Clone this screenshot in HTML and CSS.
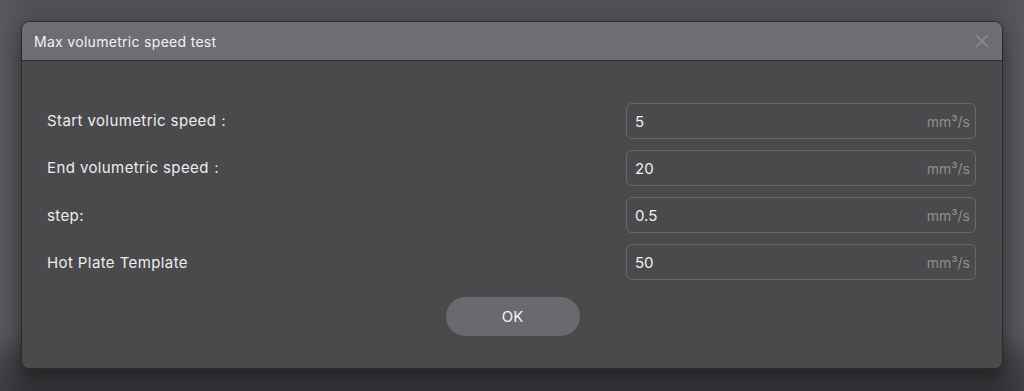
FILE: index.html
```html
<!DOCTYPE html>
<html>
<head>
<title>Max volumetric speed test</title>
<link rel="stylesheet" href="styles.css">
</head>
<body>

<div class="dialog">
 <div class="title-bar">
  <span class="title">Max volumetric speed test</span>
  <span class="close">
   <svg width="14" height="14" viewBox="0 0 14 14"><path d="M1.5 1.5 L12.5 12.5 M12.5 1.5 L1.5 12.5" stroke="#8d8c92" stroke-width="1.6" stroke-linecap="round"/></svg>
  </span>
 </div>

 <div class="content">
  <div class="form-row">
   <label>Start volumetric speed：</label>
   <div class="field"><span class="value">5</span><span class="unit">mm³/s</span></div>
  </div>
  <div class="form-row">
   <label>End volumetric speed：</label>
   <div class="field"><span class="value">20</span><span class="unit">mm³/s</span></div>
  </div>
  <div class="form-row">
   <label>step:</label>
   <div class="field"><span class="value">0.5</span><span class="unit">mm³/s</span></div>
  </div>
  <div class="form-row">
   <label>Hot Plate Template</label>
   <div class="field"><span class="value">50</span><span class="unit">mm³/s</span></div>
  </div>

  <div class="buttons">
   <button class="ok-btn">OK</button>
  </div>
 </div>
</div>

</body>
</html>
```

FILE: styles.css
```css
body {
 margin: 0;
 height: 391px;
 overflow: hidden;
 font-family: "Inter", "Liberation Sans", sans-serif;
 background:
  linear-gradient(90deg, rgba(255, 255, 255, 0.05) 0%, rgba(255, 255, 255, 0) 3%, rgba(255, 255, 255, 0) 97%, rgba(255, 255, 255, 0.05) 100%),
  linear-gradient(180deg, #504f54 0%, #4e4d52 85%, #3a393d 93%, #323135 100%);
}

.dialog {
 margin: 21px 0 0 21px;
 width: 980px;
 height: 346px;
 background-color: #4a4a4c;
 border: 1px solid #2c2c2e;
 border-radius: 8px;
 overflow: hidden;
 box-shadow: 0 8px 18px rgba(0, 0, 0, 0.4);
}

.title-bar {
 display: flex;
 align-items: center;
 justify-content: space-between;
 height: 38px;
 padding: 0 12px 0 12px;
 background-color: #6e6d73;
 border-bottom: 1px solid #2e2e30;
}
.title {
 color: #f2f2f4;
 font-size: 14px;
 letter-spacing: 0.3px;
}
.close {
 display: flex;
 margin-right: 1px;
}

.content {
 padding: 42px 26px 0 25px;
}

.form-row {
 display: flex;
 align-items: center;
 justify-content: space-between;
 margin-bottom: 11px;
}
.form-row label {
 color: #ededef;
 font-size: 15px;
 letter-spacing: 0.4px;
}
.field {
 display: flex;
 align-items: center;
 justify-content: space-between;
 box-sizing: border-box;
 width: 350px;
 height: 36px;
 padding: 0 5px 0 8px;
 border: 1px solid #69696c;
 border-radius: 6px;
}
.value {
 color: #f0f0f2;
 font-size: 15px;
}
.unit {
 color: #8e8e91;
 font-size: 14px;
}

.buttons {
 display: flex;
 justify-content: center;
 margin-top: 17px;
}
.ok-btn {
 width: 134px;
 height: 39px;
 border: none;
 border-radius: 20px;
 background-color: #6a696e;
 color: #f4f4f6;
 font-family: "Inter", "Liberation Sans", sans-serif;
 font-size: 15px;
 margin-left: 2px;
}
```
